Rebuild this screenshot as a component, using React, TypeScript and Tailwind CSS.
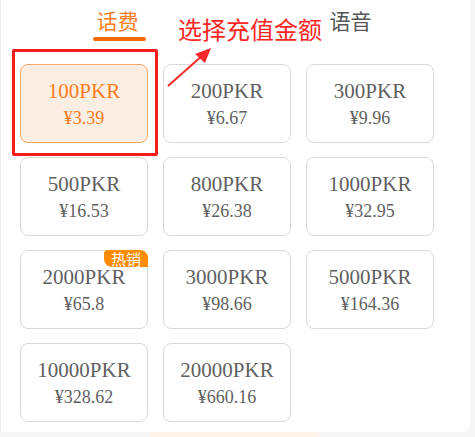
import React from 'react';

type Item = { amount: string; price: string; hot?: boolean };

const items: Item[] = [
  { amount: '100PKR', price: '¥3.39' },
  { amount: '200PKR', price: '¥6.67' },
  { amount: '300PKR', price: '¥9.96' },
  { amount: '500PKR', price: '¥16.53' },
  { amount: '800PKR', price: '¥26.38' },
  { amount: '1000PKR', price: '¥32.95' },
  { amount: '2000PKR', price: '¥65.8', hot: true },
  { amount: '3000PKR', price: '¥98.66' },
  { amount: '5000PKR', price: '¥164.36' },
  { amount: '10000PKR', price: '¥328.62' },
  { amount: '20000PKR', price: '¥660.16' },
];

const cjk = '[font-family:Noto_Sans_CJK_SC,sans-serif]';
const serif = '[font-family:Liberation_Serif,serif]';

function AmountCard({ item, active }: { item: Item; active: boolean }) {
  return (
    <div
      className={
        active
          ? 'relative h-[79px] rounded-lg border border-[#f6a86c] bg-[#fdeee4] flex flex-col items-center justify-center text-[#fb7d21]'
          : 'relative h-[79px] rounded-lg border border-[#d9d9d9] bg-white flex flex-col items-center justify-center text-[#5f5f5f]'
      }
    >
      {/* hot badge */}
      {item.hot && (
        <span
          className={`absolute -top-px -right-px h-[17px] px-[7px] rounded-tr-lg rounded-bl-lg rounded-tl-[4px] bg-[#ff8c00] text-white text-[15px] leading-[17px] ${cjk}`}
        >
          热销
        </span>
      )}
      <div className={`text-[21px] leading-[24px] mt-[1px] ${serif}`}>{item.amount}</div>
      <div className={`text-[18px] leading-[22px] mt-[4px] ${serif}`}>{item.price}</div>
    </div>
  );
}

export default function App() {
  return (
    <div className="w-[475px] h-[437px] bg-[#f6f6f6] overflow-hidden">
      <div className="relative w-[470px] h-[432px] bg-white rounded-br-lg border-l border-[#ececec]">
        {/* Tabs */}
        <div className="flex h-[64px]">
          <div className="flex-1 flex flex-col items-center pt-[5px]">
            <span className={`text-[21px] leading-[30px] text-[#fb7d21] ${cjk}`}>话费</span>
            <span className="mt-[2px] ml-[3px] w-[53px] h-[4px] rounded-full bg-[#ff6a00]" />
          </div>
          <div className="flex-1 flex flex-col items-center pt-[5px] pr-[3px]">
            <span className={`text-[21px] leading-[30px] text-[#555555] ${cjk}`}>语音</span>
          </div>
        </div>

        {/* Amount grid */}
        <div className="grid grid-cols-[128px_128px_128px] gap-x-[15px] gap-y-[14px] pl-[19px]">
          {items.map((it, i) => (
            <AmountCard key={it.amount} item={it} active={i === 0} />
          ))}
        </div>

        {/* Annotation overlay */}
        <div className="absolute left-[11px] top-[49px] w-[146px] h-[107px] border-[3px] border-[#f51c1c] rounded-[2px]" />
        <span
          className={`absolute left-[177px] top-[14px] text-[24px] leading-[30px] text-[#ff2525] ${cjk}`}
        >
          选择充值金额
        </span>
        <svg className="absolute left-[164px] top-[44px]" width="50" height="46" viewBox="0 0 50 46">
          <line x1="3" y1="42" x2="38" y2="11" stroke="#f62a2a" strokeWidth="2" />
          <polygon points="46,4 30,10 40,19" fill="#f62a2a" />
        </svg>
      </div>
      <div className="ml-[150px] w-[170px] h-[5px] rounded-t-full bg-[#fff3ea]" />
    </div>
  );
}
